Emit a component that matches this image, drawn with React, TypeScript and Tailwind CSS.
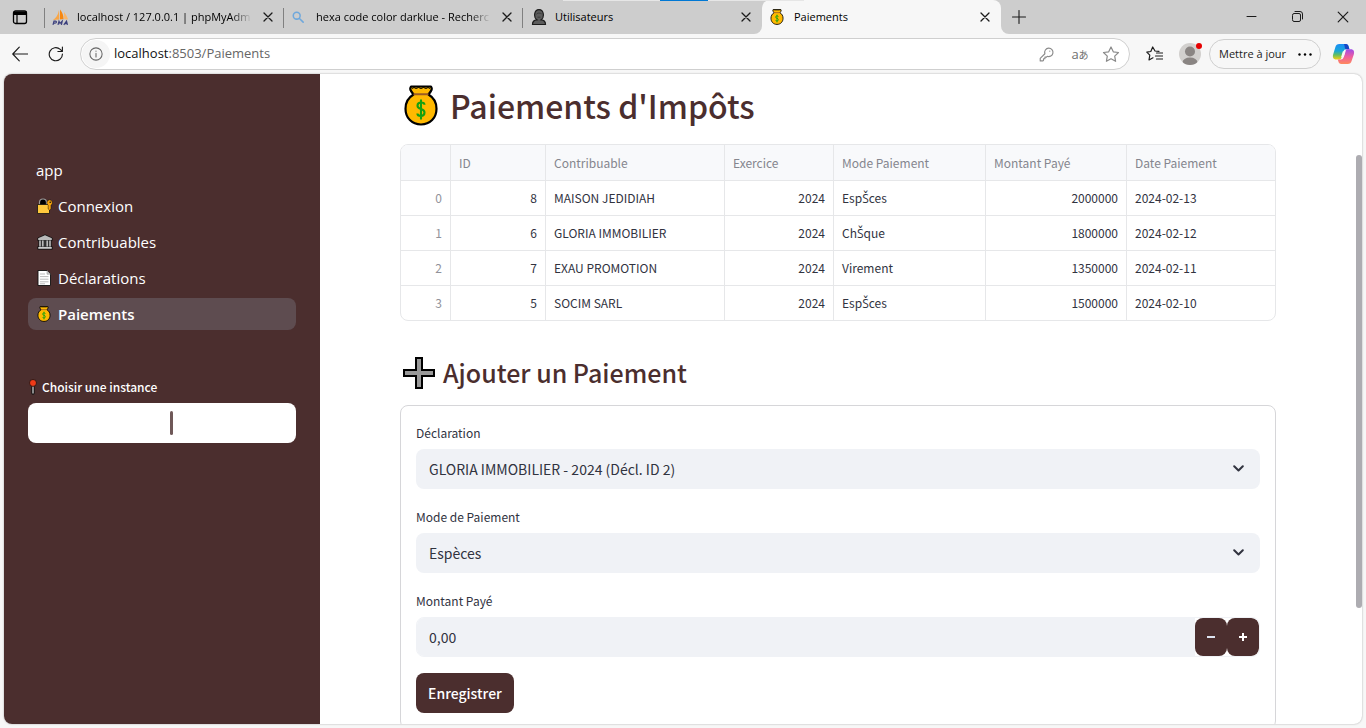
import { useState, type ReactNode } from "react";

type IconProps = { className?: string };

const sans = "font-['Noto_Sans_CJK_SC',sans-serif]";
const ui = "font-['Open_Sans','Noto_Sans',sans-serif]";

function MoneyBag({ className }: IconProps) {
  return (
    <svg viewBox="0 0 34 41" className={className} aria-hidden="true">
      <path
        d="M7 1.500h20c1 1.500 1 3 0 4.500l-2.500 3.500c5 3 8 8 8 14.200C32.500 33 26 39.500 17 39.500S1.500 33 1.500 23.700C1.500 17.500 4.500 12.500 9.500 9.500L7 6c-1-1.500-1-3 0-4.500Z"
        fill="#ffb900"
        stroke="#000"
        strokeWidth="2.200"
        strokeLinejoin="round"
      />
      <path d="M8 3.500l2-1 2 1 2.500-1 2.500 1 2.500-1 2.500 1 2-1 2 1" fill="none" stroke="#000" strokeWidth="1" />
      <path d="M9.500 9.300h15" stroke="#9a5b24" strokeWidth="2" />
      <path
        d="M20.500 19.800c0-1.500-1.300-2.300-3.500-2.300s-3.500 1-3.500 3.200c0 2 1.300 2.600 3.500 3.200s3.500 1.400 3.500 3.600c0 2.200-1.400 3.400-3.500 3.400s-3.600-1-3.600-2.500M17 14.500v20"
        fill="none"
        stroke="#16a010"
        strokeWidth="2.100"
      />
    </svg>
  );
}

function HeavyPlus({ className }: IconProps) {
  return (
    <svg viewBox="0 0 32 32" className={className} aria-hidden="true">
      <path d="M13 1h6v12h12v6H19v12h-6V19H1v-6h12Z" fill="#999" stroke="#000" strokeWidth="2" />
    </svg>
  );
}

function LockKey({ className }: IconProps) {
  return (
    <svg viewBox="0 0 16 16" className={className} aria-hidden="true">
      <path d="M2.500 7.500V4.500a3.500 3.500 0 0 1 7 0v3" fill="#000" stroke="#999" strokeWidth="1.200" />
      <path d="M.5 6.500h12v9H.5Z" fill="#ffc83d" stroke="#111" strokeWidth=".8" />
      <path d="M12.500 1.800a3 3 0 0 1 1.500 5.500v3.500l-1.500 1.400-1.300-1.200V7.300a3 3 0 0 1 1.300-5.500Z" fill="#f7a30c" stroke="#111" strokeWidth=".5" />
      <circle cx="13.200" cy="4.200" r=".8" fill="#111" />
    </svg>
  );
}

function Bank({ className }: IconProps) {
  return (
    <svg viewBox="0 0 16 16" className={className} aria-hidden="true">
      <path d="M8 .8 15.200 4v2.600h-1v6h1v2.600H.8v-2.600h1v-6h-1V4Z" fill="#333" stroke="#111" strokeWidth=".8" />
      <path d="M8 1.300 14.800 4.300v1.700H1.200V4.300Z" fill="#bbb" />
      <path d="M3 6.500v6M5.800 6.500v6M10.200 6.500v6M13 6.500v6" stroke="#bbb" strokeWidth="1.600" />
      <path d="M1.300 13h13.400v1.700H1.300Z" fill="#ccc" />
    </svg>
  );
}

function PageDoc({ className }: IconProps) {
  return (
    <svg viewBox="0 0 16 16" className={className} aria-hidden="true">
      <path d="M1 .5h9l3.500 3.500v11.500H1Z" fill="#fff" stroke="#111" strokeWidth=".9" />
      <path d="M10 .8v3.400h3.300" fill="#ccc" stroke="#999" strokeWidth=".6" />
      <path d="M3 4h5M3 6.600h8.500M3 9.200h8.500M3 11.800h8.500M3 13.800h5" stroke="#bbb" strokeWidth="1" />
    </svg>
  );
}

function Pin({ className }: IconProps) {
  return (
    <svg viewBox="0 0 10 17" className={className} aria-hidden="true">
      <path d="M5 6v9" stroke="#111" strokeWidth="3.600" strokeLinecap="round" />
      <path d="M5 6v9.500" stroke="#ccc" strokeWidth="1.400" />
      <circle cx="5" cy="4.200" r="3.700" fill="#f03a17" stroke="#111" strokeWidth=".8" />
    </svg>
  );
}

function Person({ className }: IconProps) {
  return (
    <svg viewBox="0 0 16 16" className={className} aria-hidden="true">
      <path d="M1.500 15.500c0-3 .8-4.500 4.300-4.700C2.500 8.500 2.800.6 8 .6s5.500 7.900 2.200 10.200c3.500.2 4.300 1.700 4.300 4.700Z" fill="#5c5c5c" stroke="#1c1c1c" strokeWidth="1.200" />
      <path d="M5.300 5.500c.5-1.800 4-1.800 5.400-.6M6.500 8.200h3" fill="none" stroke="#333" strokeWidth=".8" />
    </svg>
  );
}

function PmaLogo({ className }: IconProps) {
  return (
    <svg viewBox="0 0 17 17" className={className} aria-hidden="true">
      <path d="M7 1v9.500L1 11c3-2 5-5 6-10Z" fill="#f9a646" />
      <path d="M8 .5c2.500 3 3.500 6 3.500 9.500L7.800 10.600Z" fill="#f7870f" />
      <path d="M12 3c1.500 2 3.500 5 4 7.500l-3.800-.2Z" fill="#fbb667" />
      <path d="M1 15.800l1-3.600h1.500c1.500 0 1.200 2-.5 2H1.800M6 15.800l1-3.600 1 2.200 2.200-2.200-.8 3.600M11.800 15.800l2.700-3.600 1 3.600M13 14.600h2" fill="none" stroke="#3b3f7d" strokeWidth="1.200" />
    </svg>
  );
}

function Copilot({ className }: IconProps) {
  return (
    <svg viewBox="0 0 24 22" className={className} aria-hidden="true">
      <defs>
        <linearGradient id="cpBlue" x1="0" y1="0" x2="0" y2="1">
          <stop offset="0" stopColor="#1b8df5" />
          <stop offset=".45" stopColor="#18a7d8" />
          <stop offset=".7" stopColor="#62bd62" />
          <stop offset="1" stopColor="#f5cf12" />
        </linearGradient>
        <linearGradient id="cpPink" x1="0" y1="0" x2="0" y2="1">
          <stop offset="0" stopColor="#a14be8" />
          <stop offset=".5" stopColor="#ee5da0" />
          <stop offset="1" stopColor="#ff8a5c" />
        </linearGradient>
      </defs>
      <path d="M7.500 0h7c2 0 2.600 1 3.200 3l.8 2.800h-3.700c-1.500 0-2.300.8-2.800 2.400l-2 6.300c-.6 1.900-1.400 2.500-3 2.500H4C.8 17-.2 14.500.6 11.500L3 3.500C3.700 1 5 0 7.500 0Z" fill="url(#cpBlue)" />
      <path d="M12.500 0h2c2 0 2.600 1 3.200 3l.8 2.800h-4.300C13 4 13.500 1.500 12.500 0Z" fill="#1745c4" />
      <path d="M16.500 22h-7c-2 0-2.600-1-3.200-3l-.6-2h3.500c1.500 0 2.300-.8 2.800-2.400l2-6.300c.6-1.900 1.400-2.500 3-2.500h3c3.200 0 4.200 2.500 3.400 5.500L21 18.500c-.7 2.500-2 3.500-4.500 3.500Z" fill="url(#cpPink)" />
      <path d="M11.300 8h3l-2 6.500h-3Z" fill="#f7f7f7" />
    </svg>
  );
}

function Stroke({ d, box, className, width = 1 }: { d: string; box: string; className?: string; width?: number }) {
  return (
    <svg viewBox={box} className={className} fill="none" stroke="currentColor" strokeWidth={width} strokeLinecap="round" strokeLinejoin="round" aria-hidden="true">
      <path d={d} />
    </svg>
  );
}

const CROSS = "M1 1l8 8M9 1 1 9";
const STAR = "M9 1.500l2.300 4.800 5.200.7-3.800 3.600.9 5.200L9 13.300l-4.600 2.500.9-5.200L1.500 7l5.200-.7Z";

function Tab({ icon, title, active = false, fade = false, divider = false }: { icon: ReactNode; title: string; active?: boolean; fade?: boolean; divider?: boolean }) {
  return (
    <div className={`h-full w-[239px] ${active ? "bg-[#cdcdcd]" : ""}`}>
      <div className={`relative flex h-full items-center pr-2 pl-2 ${active ? "rounded-t-lg bg-[#f7f7f7]" : ""}`}>
        <span className="flex w-6 shrink-0">{icon}</span>
        <span className={`min-w-0 flex-1 overflow-hidden text-[11px] whitespace-nowrap text-black ${fade ? "[mask-image:linear-gradient(to_right,black_88%,transparent)]" : ""}`}>{title}</span>
        <button type="button" aria-label={`Fermer ${title}`} className="ml-2 flex size-4 items-center justify-center">
          <Stroke d={CROSS} box="0 0 10 10" className="size-[10px]" width={1.3} />
        </button>
        {divider && <span className="absolute top-2 right-0 h-5 w-px bg-[#808080]" />}
      </div>
    </div>
  );
}

function Browser() {
  return (
    <header className={`${ui} text-[#1b1b1b]`}>
      <div className="relative flex h-[34px]">
        <div className="flex rounded-br-lg bg-[#cdcdcd]">
          <button type="button" aria-label="Onglets" className="relative flex w-[45px] items-center pl-3">
            <svg viewBox="0 0 16 16" className="size-4" aria-hidden="true">
              <rect x="1.500" y="2" width="13" height="12.500" rx="2" fill="none" stroke="#000" strokeWidth="1.300" />
              <path d="M2 3h12v2.500H2ZM5 6v8.500" fill="#000" stroke="#000" strokeWidth="1.200" />
            </svg>
            <span className="absolute top-2 right-0 h-5 w-px bg-[#808080]" />
          </button>
          <Tab icon={<PmaLogo className="-ml-px size-[17px]" />} title="localhost / 127.0.0.1 | phpMyAdm" fade divider />
          <Tab icon={<Stroke d="M9 9l4 4M5.500 1.500a4 4 0 1 1 0 8 4 4 0 0 1 0-8" box="0 0 14 14" className="size-3 text-[#6fa8dc]" width={1.8} />} title="hexa code color darklue - Recherc" fade divider />
          <Tab icon={<Person className="size-4" />} title="Utilisateurs" />
        </div>
        <Tab icon={<MoneyBag className="h-4 w-[14px]" />} title="Paiements" active />
        <div className="flex flex-1 items-center justify-between rounded-bl-lg bg-[#cdcdcd]">
          <button type="button" aria-label="Nouvel onglet" className="px-[11px]">
            <Stroke d="M7 .5v13M.5 7h13" box="0 0 14 14" className="size-[14px]" width={1.1} />
          </button>
          <div className="flex">
            <button type="button" aria-label="Réduire" className="flex w-[46px] justify-center">
              <Stroke d="M.5 5.500h9" box="0 0 10 11" className="size-[11px]" />
            </button>
            <button type="button" aria-label="Restaurer" className="flex w-[46px] justify-center">
              <Stroke d="M.5 4a1.500 1.500 0 0 1 1.500-1.500h5A1.500 1.500 0 0 1 8.500 4v5A1.500 1.500 0 0 1 7 10.500H2A1.500 1.500 0 0 1 .5 9ZM3 .5h5a2.500 2.500 0 0 1 2.500 2.500v5" box="0 0 11 11" className="size-[11px]" />
            </button>
            <button type="button" aria-label="Fermer" className="flex w-[46px] justify-center">
              <Stroke d={CROSS} box="0 0 10 10" className="size-3" />
            </button>
          </div>
        </div>
        <span className="absolute top-0 left-[563px] flex h-px w-[241px] justify-center bg-[#e6e6e6]">
          <span className="h-px w-12 bg-[#0078d4]" />
        </span>
      </div>
      <div className="flex h-10 items-center pl-3 pr-[11px]">
        <button type="button" aria-label="Retour" className="mr-5">
          <Stroke d="M16 8H.8M7.500 1 .8 8l6.700 7" box="0 0 16.500 16" className="size-4" width={1.2} />
        </button>
        <button type="button" aria-label="Actualiser" className="mr-4">
          <Stroke d="M15.300 8.500A7 7 0 1 1 13 3.500L15 5.500M15.300 1v4.800h-4.800" box="0 0 17 17" className="size-4" width={1.2} />
        </button>
        <div className="flex h-8 flex-1 items-center rounded-full border border-[#cfcfcf] bg-white pr-[9px] pl-px text-[#8a8a8a]">
          <span className="flex size-7 items-center justify-center rounded-full bg-[#f5f5f5] text-[#666]">
            <Stroke d="M8 1a7 7 0 1 1 0 14A7 7 0 0 1 8 1M8 7.300v4M8 4.700v.2" box="0 0 16 16" className="size-[14px]" width={1.2} />
          </span>
          <span className="ml-1 flex-1 text-[13px] text-[#666]">
            <span className="text-[#111]">localhost</span>:8503/Paiements
          </span>
          <Stroke d="M10.300 1.200a4.500 4.500 0 1 1-1.500 8.700L8 10.800H6.300v1.700H4.800v1.700l-.6.600H1.300v-2.600l5-5A4.500 4.500 0 0 1 10.300 1.200M11.500 4.300v.2" box="0 0 16 16" className="mr-4 size-[15px]" width={1.2} />
          <span className="mr-3 flex w-5 items-baseline justify-center font-['Open_Sans','Noto_Sans_CJK_JP',sans-serif] whitespace-nowrap text-[#6f6f6f]">
            <span className="text-[13px] leading-4">a</span>
            <span className="text-[10px] leading-4">あ</span>
          </span>
          <Stroke d={STAR} box="0 0 18 17" className="size-[18px]" width={1.2} />
        </div>
        <button type="button" aria-label="Favoris" className="mr-4 ml-4">
          <Stroke d="M13 5.300 9 5 6.700 1 4.800 5.500.8 6.200l3 3L3 14l4-2.200M10.500 7h6M9.500 10h7M10.500 13h6" box="0 0 17 16" className="h-4 w-[17px]" width={1.2} />
        </button>
        <button type="button" aria-label="Profil" className="relative">
          <svg viewBox="0 0 22 22" className="size-[22px]" aria-hidden="true">
            <defs>
              <clipPath id="avatar"><circle cx="11" cy="11" r="11" /></clipPath>
            </defs>
            <g clipPath="url(#avatar)">
              <rect width="22" height="22" fill="#d2d0ce" />
              <circle cx="11" cy="8.500" r="5" fill="#8a8583" />
              <ellipse cx="11" cy="19.500" rx="7.500" ry="5" fill="#8a8583" />
            </g>
          </svg>
          <span className="absolute top-0 -right-px size-[6px] rounded-full bg-[#e60000]" />
        </button>
        <button type="button" className="ml-2 flex h-[30px] w-28 items-center justify-between rounded-full border border-[#cfcfcf] pr-2 pl-[9px] text-[11px] whitespace-nowrap">
          Mettre à jour
          <svg viewBox="0 0 14 3" className="h-[3px] w-[14px]" aria-hidden="true">
            <circle cx="1.500" cy="1.500" r="1.200" /><circle cx="7" cy="1.500" r="1.200" /><circle cx="12.500" cy="1.500" r="1.200" />
          </svg>
        </button>
        <button type="button" aria-label="Copilot" className="ml-[11px]">
          <Copilot className="h-5 w-[23px]" />
        </button>
      </div>
    </header>
  );
}

const NAV = [
  { label: "app", icon: null },
  { label: "Connexion", icon: <LockKey className="size-4" /> },
  { label: "Contribuables", icon: <Bank className="size-4" /> },
  { label: "Déclarations", icon: <PageDoc className="size-4" /> },
  { label: "Paiements", icon: <MoneyBag className="h-4 w-[14px]" />, active: true },
];

function Sidebar() {
  return (
    <aside className="w-[316px] shrink-0 bg-[#4b2e2e] px-6 pt-20 text-white">
      <nav className={`${ui} flex flex-col gap-1 text-[15px]`}>
        {NAV.map((item) => (
          <a key={item.label} href={`#${item.label}`} className={`flex h-8 items-center rounded-lg px-2 ${item.active ? "bg-[#5e4c50] font-semibold" : ""}`}>
            {item.icon && <span className="mr-1 flex w-[18px] pl-px">{item.icon}</span>}
            {item.label}
          </a>
        ))}
      </nav>
      <label htmlFor="instance" className={`${sans} mt-[45px] flex h-6 items-center gap-1 text-xs font-medium`}>
        <Pin className="h-4 w-[10px]" />
        Choisir une instance
      </label>
      <div className="relative mt-1">
        <input id="instance" className="h-10 w-full rounded-lg bg-white px-3 text-sm text-[#4b2e2e] outline-none" />
        <span className="pointer-events-none absolute top-2 left-1/2 ml-2 h-6 w-[3px] rounded-sm bg-[#4b2e2e]/80" />
      </div>
    </aside>
  );
}

const HEADERS = ["", "ID", "Contribuable", "Exercice", "Mode Paiement", "Montant Payé", "Date Paiement"];
const ROWS = [
  ["0", "8", "MAISON JEDIDIAH", "2024", "EspŠces", "2000000", "2024-02-13"],
  ["1", "6", "GLORIA IMMOBILIER", "2024", "ChŠque", "1800000", "2024-02-12"],
  ["2", "7", "EXAU PROMOTION", "2024", "Virement", "1350000", "2024-02-11"],
  ["3", "5", "SOCIM SARL", "2024", "EspŠces", "1500000", "2024-02-10"],
];
const RIGHT = [0, 1, 3, 5];

function CellText({ text }: { text: string }) {
  const [head, tail] = text.split("Š");
  if (tail === undefined) return <>{text}</>;
  return (
    <>
      {head}
      <span className="font-['Open_Sans',sans-serif] leading-none">Š</span>
      {tail}
    </>
  );
}

function PaymentsTable() {
  return (
    <div className="overflow-hidden rounded-lg border border-[#e6e7e9]">
      <table className="w-full table-fixed border-separate border-spacing-0 text-xs">
        <colgroup>
          <col className="w-[50px]" />
          <col className="w-[95px]" />
          <col className="w-[179px]" />
          <col className="w-[109px]" />
          <col className="w-[152px]" />
          <col className="w-[141px]" />
          <col />
        </colgroup>
        <thead>
          <tr className="h-9">
            {HEADERS.map((h, i) => (
              <th key={i} className="border-r border-b border-[#e6e7e9] bg-[#f8f9fb] px-2 py-0 text-left font-normal text-[#85868e] last:border-r-0">{h}</th>
            ))}
          </tr>
        </thead>
        <tbody className="[&>tr:last-child>td]:border-b-0">
          {ROWS.map((row) => (
            <tr key={row[0]} className="h-[35px] last:h-[34px]">
              {row.map((cell, i) => (
                <td key={i} className={`border-r border-b border-[#e6e7e9] px-2 py-0 last:border-r-0 ${RIGHT.includes(i) ? "text-right" : ""} ${i === 0 ? "text-[#91929a]" : "text-[#31333f]"}`}>
                  <CellText text={cell} />
                </td>
              ))}
            </tr>
          ))}
        </tbody>
      </table>
    </div>
  );
}

function SelectField({ id, label, value }: { id: string; label: string; value: string }) {
  return (
    <div>
      <label htmlFor={id} className="flex h-6 items-center text-xs">{label}</label>
      <div className="relative mt-1">
        <select id={id} className="h-10 w-full appearance-none rounded-lg bg-[#f0f2f6] px-[13px] text-sm outline-none">
          <option>{value}</option>
        </select>
        <Stroke d="M1.200 1.200 5.500 5.500l4.300-4.300" box="0 0 11 7" className="pointer-events-none absolute top-4 right-4 h-[7px] w-[11px]" width={2} />
      </div>
    </div>
  );
}

function PaymentForm() {
  const [amount, setAmount] = useState("0,00");
  const step = (delta: number) =>
    setAmount((v) => Math.max(0, parseFloat(v.replace(",", ".")) + delta).toFixed(2).replace(".", ","));
  return (
    <form className="flex flex-col items-stretch gap-4 rounded-lg border border-[#d6d6d9] p-[15px] text-[#31333f]" onSubmit={(e) => e.preventDefault()}>
      <SelectField id="declaration" label="Déclaration" value="GLORIA IMMOBILIER - 2024 (Décl. ID 2)" />
      <SelectField id="mode" label="Mode de Paiement" value="Espèces" />
      <div>
        <label htmlFor="montant" className="flex h-6 items-center text-xs">Montant Payé</label>
        <div className="mt-1 flex h-10 overflow-hidden rounded-lg border border-[#f0f2f6] bg-white">
          <input id="montant" value={amount} onChange={(e) => setAmount(e.target.value)} className="min-w-0 flex-1 bg-[#f0f2f6] px-3 text-sm outline-none" />
          <button type="button" aria-label="Diminuer" onClick={() => step(-1)} className="flex w-8 items-center justify-center rounded-lg bg-[#4b2e2e] text-[#dde3f0]">
            <svg viewBox="0 0 8 8" className="size-2" aria-hidden="true"><path d="M0 3h8v2H0Z" fill="currentColor" /></svg>
          </button>
          <button type="button" aria-label="Augmenter" onClick={() => step(1)} className="flex w-8 items-center justify-center rounded-lg bg-[#4b2e2e] text-white">
            <svg viewBox="0 0 8 8" className="size-2" aria-hidden="true"><path d="M3 0h2v3h3v2H5v3H3V5H0V3h3Z" fill="currentColor" /></svg>
          </button>
        </div>
      </div>
      <button type="submit" className="h-10 self-start rounded-lg bg-[#4b2e2e] px-3 text-sm font-medium text-white">Enregistrer</button>
    </form>
  );
}

export default function App() {
  return (
    <div className="flex h-screen flex-col overflow-hidden bg-[#f7f7f7]">
      <Browser />
      <div className="mx-1 mb-1 flex min-h-0 flex-1 overflow-hidden rounded-lg bg-white shadow-[0_0_2px_rgba(0,0,0,0.35)]">
        <Sidebar />
        <main className={`${sans} min-w-0 flex-1 overflow-hidden px-20 pt-1`}>
          <h1 className="mb-3 flex h-[54px] items-center gap-3 pl-1 text-[32px] font-medium whitespace-nowrap text-[#4b2e2e]">
            <MoneyBag className="h-[41px] w-[34px]" />
            Paiements d'Impôts
          </h1>
          <PaymentsTable />
          <h2 className="mt-6 mb-1 flex h-14 items-center gap-2 pl-[3px] text-[25px] font-medium whitespace-nowrap text-[#4b2e2e]">
            <HeavyPlus className="size-8" />
            Ajouter un Paiement
          </h2>
          <PaymentForm />
        </main>
        <div className="flex w-[6px] shrink-0 flex-col pt-[81px]">
          <span className="h-[453px] rounded-full bg-[#adacb1]" />
        </div>
      </div>
    </div>
  );
}
